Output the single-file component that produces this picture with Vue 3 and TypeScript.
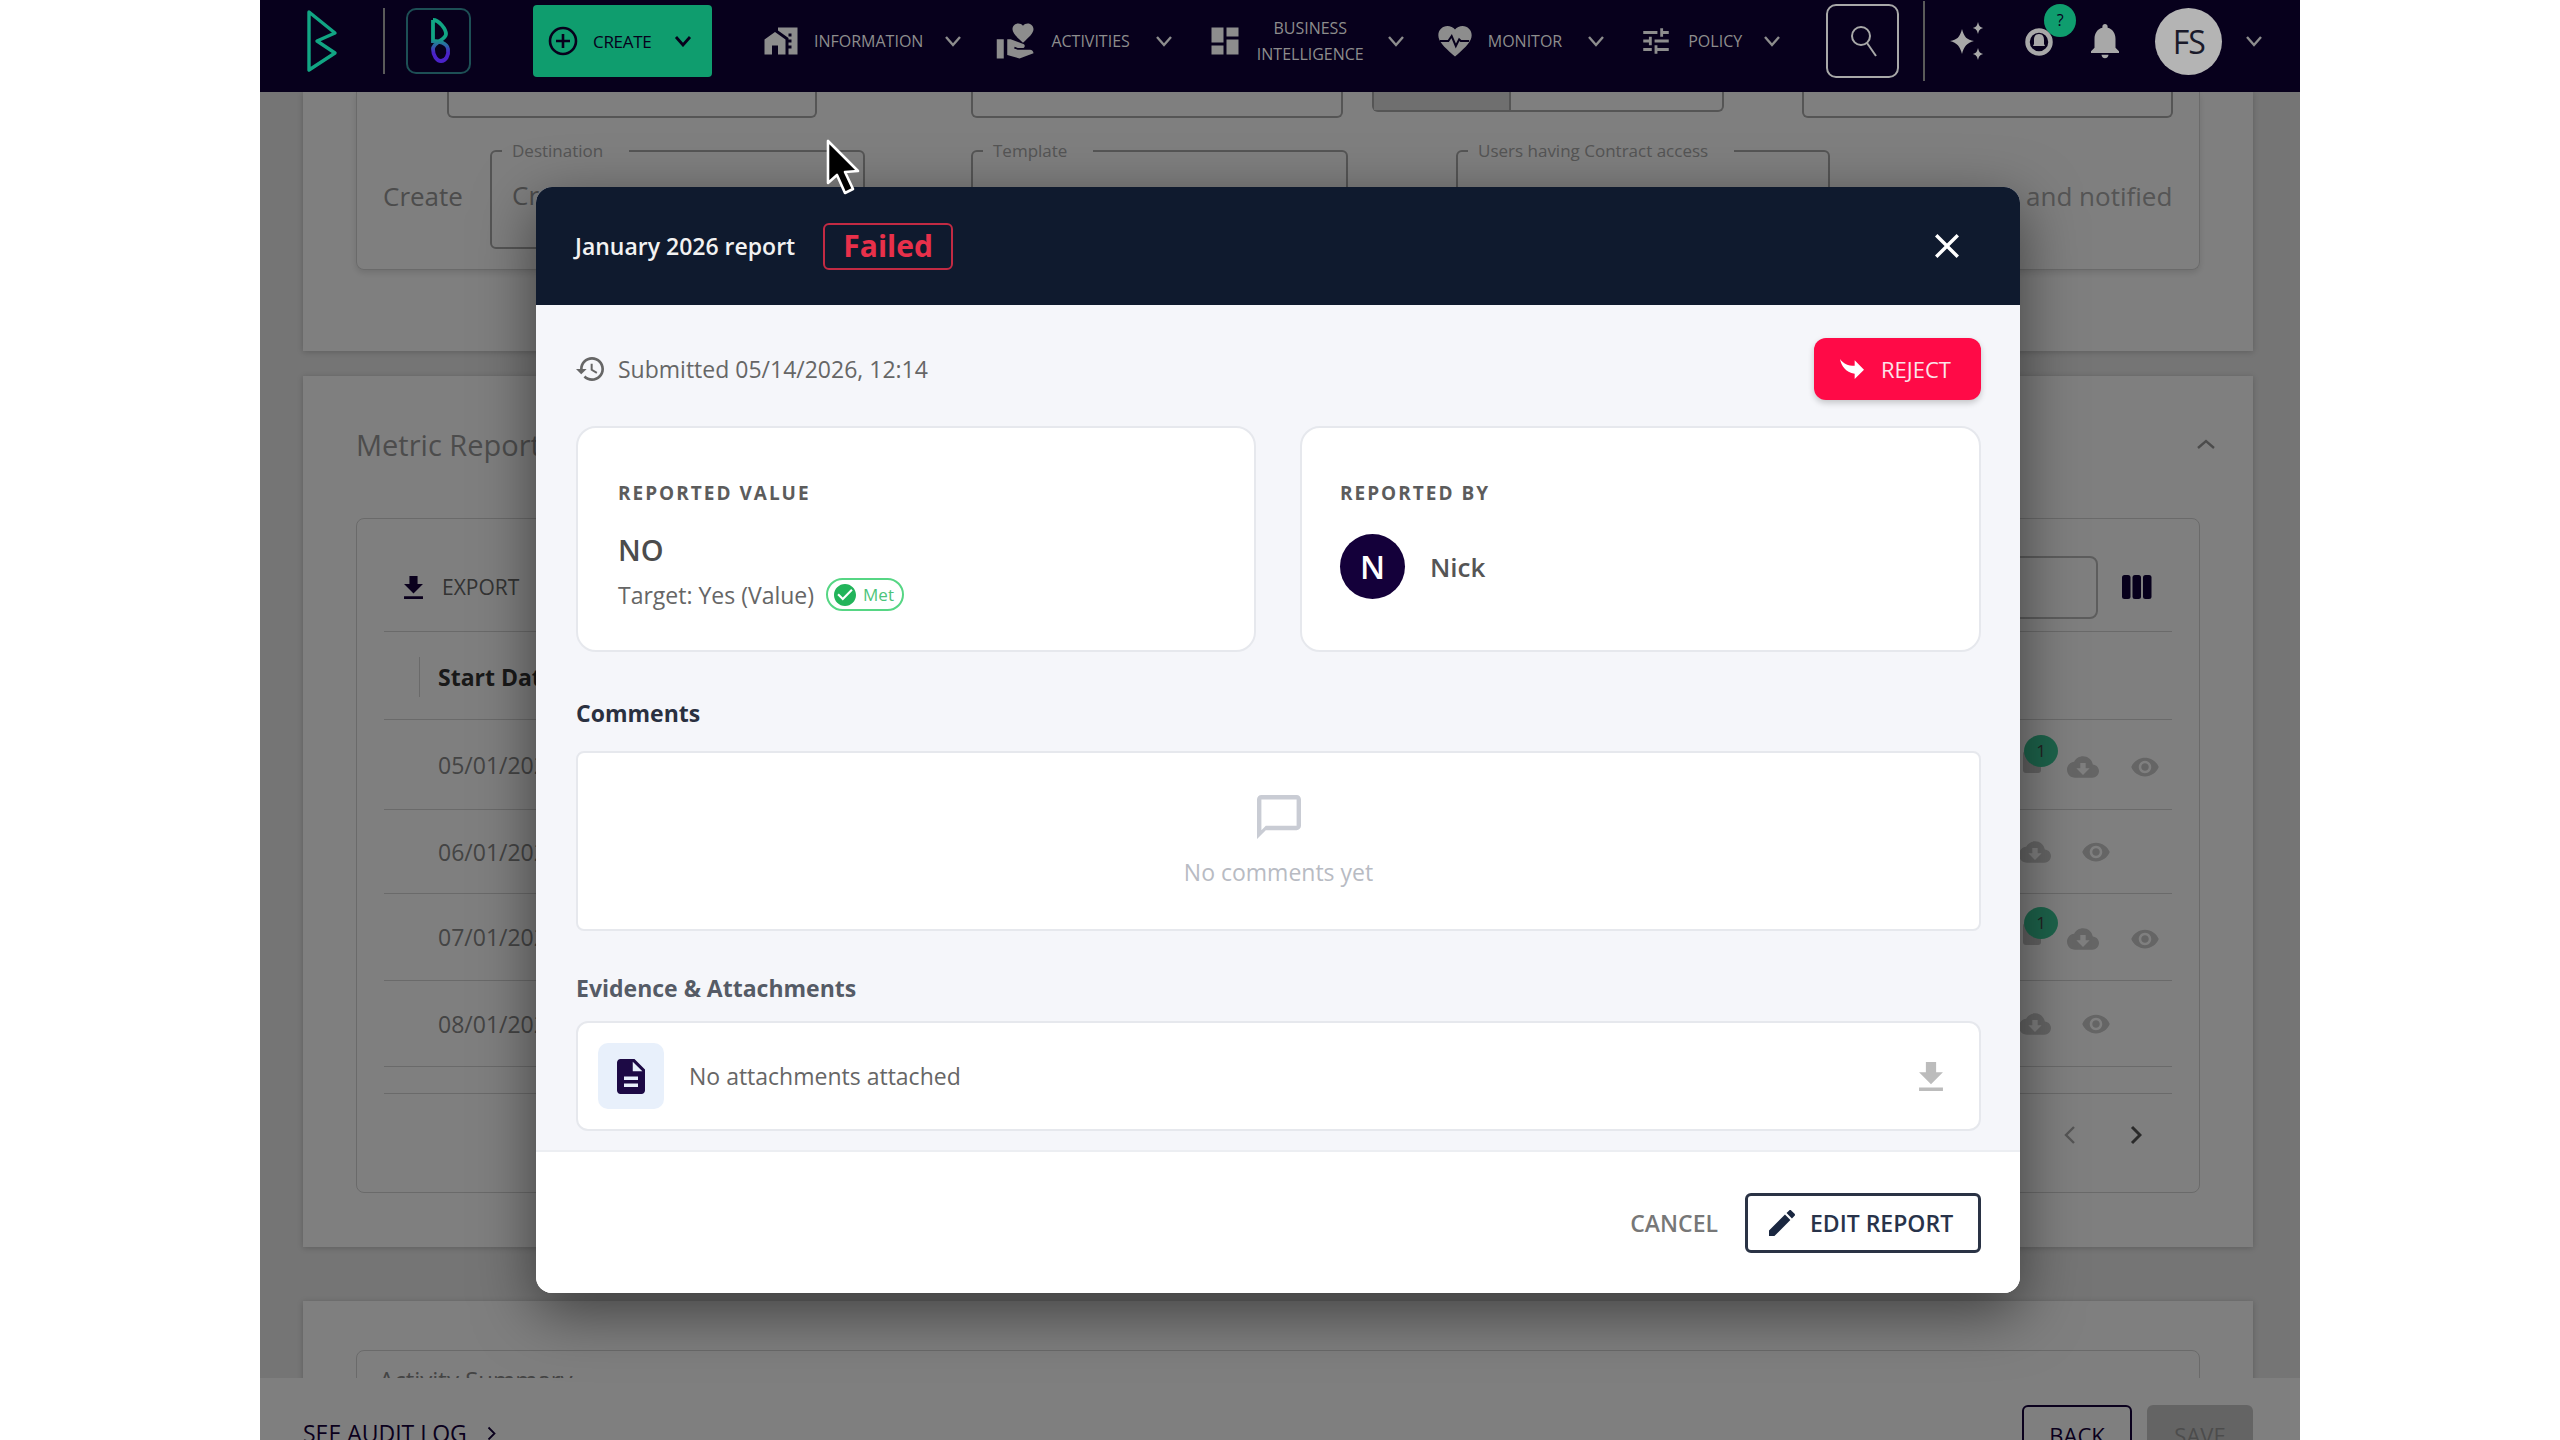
<script setup lang="ts">
interface NavItem {
  label: string[]
  icon: string
  size: number
  cls: string
}

interface ReportRow {
  date: string
  height: number
  badge: boolean
}

const navItems: NavItem[] = [
  {
    label: ['INFORMATION'],
    size: 36,
    cls: 'nav-item--info',
    icon: 'M1 11v10h5v-6h4v6h5V11L8 6z M10 3v1.97l7 5V11h2v2h-2v2h2v2h-2v4h6V3H10zm9 6h-2V7h2v2z',
  },
  {
    label: ['ACTIVITIES'],
    size: 42,
    cls: 'nav-item--activities',
    icon: 'M1 11h4v11H1zm15-7.75C16.65 2.49 17.66 2 18.7 2 20.55 2 22 3.45 22 5.3c0 2.27-2.91 4.9-6 7.7-3.09-2.81-6-5.44-6-7.7C10 3.45 11.45 2 13.3 2c1.04 0 2.05.49 2.7 1.25zM20 17h-7l-2.09-.73.33-.94L13 16h2.82c.65 0 1.18-.53 1.18-1.18 0-.49-.31-.93-.77-1.11L8.97 11H7v9.02L14 22l8.01-3c-.01-1.1-.9-2-2.01-2z',
  },
  {
    label: ['BUSINESS', 'INTELLIGENCE'],
    size: 36,
    cls: 'nav-item--bi',
    icon: 'M3 13h8V3H3v10zm0 8h8v-6H3v6zm10 0h8V11h-8v10zm0-18v6h8V3h-8z',
  },
  {
    label: ['MONITOR'],
    size: 40,
    cls: 'nav-item--monitor',
    icon: 'M12 21.35l-1.45-1.32C5.4 15.36 2 12.28 2 8.5 2 5.42 4.42 3 7.5 3c1.74 0 3.41.81 4.5 2.09C13.09 3.81 14.76 3 16.5 3 19.58 3 22 5.42 22 8.5c0 3.78-3.4 6.86-8.55 11.54L12 21.35z',
  },
  {
    label: ['POLICY'],
    size: 34,
    cls: 'nav-item--policy',
    icon: 'M3 17v2h6v-2H3zM3 5v2h10V5H3zm10 16v-2h8v-2h-8v-2h-2v6h2zM7 9v2H3v2h4v2h2V9H7zm14 4v-2H11v2h10zm-6-4h2V7h4V5h-4V3h-2v6z',
  },
]

const rows: ReportRow[] = [
  { date: '05/01/2026', height: 90, badge: true },
  { date: '06/01/2026', height: 84, badge: false },
  { date: '07/01/2026', height: 87, badge: true },
  { date: '08/01/2026', height: 86, badge: false },
]

const bellPath =
  'M12 22c1.1 0 2-.9 2-2h-4c0 1.1.89 2 2 2zm6-6v-5c0-3.07-1.64-5.64-4.5-6.32V4c0-.83-.67-1.5-1.5-1.5s-1.5.67-1.5 1.5v.68C7.63 5.36 6 7.92 6 11v5l-2 2v1h16v-1l-2-2z'
const downloadPath = 'M19 9h-4V3H9v6H5l7 7 7-7zM5 18v2h14v-2H5z'
const cloudPath =
  'M19.35 10.04C18.67 6.59 15.64 4 12 4 9.11 4 6.6 5.64 5.35 8.04 2.34 8.36 0 10.91 0 14c0 3.31 2.69 6 6 6h13c2.76 0 5-2.24 5-5 0-2.64-2.05-4.78-4.65-4.96zM17 13l-5 5-5-5h3V9h4v4h3z'
const eyePath =
  'M12 4.5C7 4.5 2.73 7.61 1 12c1.73 4.39 6 7.5 11 7.5s9.27-3.11 11-7.5c-1.73-4.39-6-7.5-11-7.5zM12 17c-2.76 0-5-2.24-5-5s2.24-5 5-5 5 2.24 5 5-2.24 5-5 5zm0-8c-1.66 0-3 1.34-3 3s1.34 3 3 3 3-1.34 3-3-1.34-3-3-3z'
</script>

<template>
  <div class="screen">
    <header class="nav">
      <svg class="logo" viewBox="0 0 32 64" width="32" height="64">
        <path d="M3 3 L29 24 L11 32 L29 44 L3 61 Z" fill="none" stroke="#11a583" stroke-width="3.4" stroke-linejoin="round" />
      </svg>
      <span class="nav-rule"></span>
      <div class="logo-box">
        <svg viewBox="0 0 40 60" width="40" height="60">
          <defs>
            <linearGradient id="brandB" x1="0" y1="0" x2="0" y2="1">
              <stop offset="0.45" stop-color="#11a583" />
              <stop offset="0.8" stop-color="#4a22c9" />
            </linearGradient>
          </defs>
          <path d="M14 9 C20 9 27 18 27 23 C27 29 14 31 14 38 C14 45 18 50 22 50 C27 50 30 44 29 38 C28 32 20 30 14 30 L14 9" fill="none" stroke="url(#brandB)" stroke-width="3.8" />
        </svg>
      </div>
      <button class="create-btn">
        <svg viewBox="0 0 30 30" width="30" height="30">
          <circle cx="15" cy="15" r="13" fill="none" stroke="#07001c" stroke-width="2.6" />
          <path d="M15 8v14M8 15h14" stroke="#07001c" stroke-width="2.6" />
        </svg>
        <span>CREATE</span>
        <svg class="chev" viewBox="0 0 18 12" width="18" height="12"><path d="M2 2l7 8 7-8" fill="none" stroke="#07001c" stroke-width="2.8" /></svg>
      </button>
      <div v-for="item in navItems" :key="item.label[0]" class="nav-item" :class="item.cls">
        <span class="nav-icon">
          <svg viewBox="0 0 24 24" :width="item.size" :height="item.size">
            <path :d="item.icon" fill="#8d8d8d" />
            <path v-if="item.label[0] === 'MONITOR'" d="M3 12h5l2-3 2.5 6 2-4 1 1h5" fill="none" stroke="#07001c" stroke-width="1.2" />
          </svg>
        </span>
        <span class="nav-label">
          <span v-for="line in item.label" :key="line">{{ line }}</span>
        </span>
        <svg class="chev" viewBox="0 0 18 12" width="18" height="12"><path d="M2 2l7 8 7-8" fill="none" stroke="#8d8d8d" stroke-width="2.4" /></svg>
      </div>
      <div class="search-box">
        <svg viewBox="0 0 30 34" width="30" height="34">
          <circle cx="13" cy="12" r="9" fill="none" stroke="#a8a8a8" stroke-width="2" />
          <path d="M19 19l9 13" stroke="#a8a8a8" stroke-width="2" />
        </svg>
      </div>
      <span class="nav-rule nav-rule--tall"></span>
      <svg class="sparkle" viewBox="0 0 36 38" width="36" height="38">
        <path d="M13 7 C15 15 18 18 25 19 C18 21 15 24 13 32 C11 24 8 21 1 19 C8 18 11 15 13 7Z M29 0 C30 4 31 5 34 6 C31 7 30 8 29 12 C28 8 27 7 24 6 C27 5 28 4 29 0Z M29 26 C30 30 31 31 34 32 C31 33 30 34 29 38 C28 34 27 33 24 32 C27 31 28 30 29 26Z" fill="#a8a8a8" />
      </svg>
      <div class="ring-bell">
        <svg viewBox="0 0 28 34" width="28" height="34">
          <circle cx="14" cy="18" r="11.5" fill="none" stroke="#a8a8a8" stroke-width="4.5" />
          <path d="M14 10c-4 0-5 3-5 6v4l-1 2h12l-1-2v-4c0-3-1-6-5-6z" fill="#a8a8a8" />
        </svg>
        <span class="ring-badge">?</span>
      </div>
      <svg class="plain-bell" viewBox="4 2 16 20.4" width="28" height="36"><path :d="bellPath" fill="#a8a8a8" /></svg>
      <div class="avatar">FS</div>
      <svg class="chev chev--last" viewBox="0 0 18 12" width="18" height="12"><path d="M2 2l7 8 7-8" fill="none" stroke="#8d8d8d" stroke-width="2.4" /></svg>
    </header>

    <main class="page">
      <section class="panel panel--create">
        <div class="inner inner--create">
          <div class="stub-row">
            <div class="stub stub--a"></div>
            <div class="stub stub--b"></div>
            <div class="stub stub--c"><span></span></div>
            <div class="stub stub--d"></div>
          </div>
          <div class="rule-row">
            <span class="rule-text">Create</span>
            <fieldset class="field field--dest"><legend>Destination</legend><span>Create</span></fieldset>
            <fieldset class="field field--tpl"><legend>Template</legend></fieldset>
            <fieldset class="field field--users"><legend>Users having Contract access</legend></fieldset>
            <span class="rule-text rule-text--end">and notified</span>
          </div>
        </div>
      </section>

      <section class="panel panel--metric">
        <div class="metric-head">
          <h2>Metric Reports</h2>
          <svg viewBox="0 0 20 12" width="20" height="12"><path d="M2 10l8-7 8 7" fill="none" stroke="#999" stroke-width="2.4" /></svg>
        </div>
        <div class="inner inner--table">
          <div class="toolbar">
            <button class="export">
              <svg viewBox="5 3 14 17" width="19" height="23"><path :d="downloadPath" fill="#14003a" /></svg>
              EXPORT
            </button>
            <div class="toolbar-right">
              <div class="table-search"></div>
              <svg viewBox="0 0 30 24" width="30" height="24">
                <rect x="0" y="0" width="8.5" height="24" rx="2.5" fill="#0e0038" />
                <rect x="10.5" y="0" width="8.5" height="24" rx="2.5" fill="#0e0038" />
                <rect x="21" y="0" width="8.5" height="24" rx="2.5" fill="#0e0038" />
              </svg>
            </div>
          </div>
          <div class="table-head"><span class="head-sep"></span><b>Start Date</b></div>
          <div v-for="row in rows" :key="row.date" class="table-row" :style="{ height: row.height + 'px' }">
            <span>{{ row.date }}</span>
            <div class="row-actions" :class="{ 'row-actions--short': !row.badge }">
              <span v-if="row.badge" class="doc-stub"></span>
              <span v-if="row.badge" class="doc-badge">1</span>
              <svg viewBox="0 0 24 24" width="32" height="32"><path :d="cloudPath" fill="#cacaca" /></svg>
              <svg class="eye" viewBox="0 0 24 24" width="30" height="30"><path :d="eyePath" fill="#cacaca" /></svg>
            </div>
          </div>
          <div class="table-spacer"></div>
          <div class="pager">
            <svg viewBox="0 0 12 20" width="12" height="20"><path d="M10 2l-8 8 8 8" fill="none" stroke="#aaa" stroke-width="2.4" /></svg>
            <svg viewBox="0 0 12 20" width="12" height="20"><path d="M2 2l8 8-8 8" fill="none" stroke="#555" stroke-width="3" /></svg>
          </div>
        </div>
      </section>

      <section class="panel panel--activity">
        <div class="inner inner--activity">Activity Summary</div>
      </section>
    </main>

    <footer class="page-foot">
      <span class="audit">SEE AUDIT LOG <svg viewBox="0 0 12 20" width="9" height="15"><path d="M2 2l8 8-8 8" fill="none" stroke="#14003a" stroke-width="2.4" /></svg></span>
      <div class="foot-btns">
        <button class="btn-back">BACK</button>
        <button class="btn-save">SAVE</button>
      </div>
    </footer>

    <div class="overlay">
      <div class="modal">
        <div class="modal-head">
          <span class="modal-title">January 2026 report</span>
          <span class="status-chip">Failed</span>
          <svg class="modal-close" viewBox="5 5 14 14" width="24" height="24">
            <path d="M19 6.41 17.59 5 12 10.59 6.41 5 5 6.41 10.59 12 5 17.59 6.41 19 12 13.41 17.59 19 19 17.59 13.41 12z" fill="#fff" />
          </svg>
        </div>

        <div class="modal-body">
          <div class="submitted-row">
            <div class="submitted">
              <svg viewBox="1 3 21 18" width="28" height="24">
                <path d="M13 3c-4.97 0-9 4.03-9 9H1l3.89 3.89.07.14L9 12H6c0-3.87 3.13-7 7-7s7 3.13 7 7-3.13 7-7 7c-1.93 0-3.68-.79-4.94-2.06l-1.42 1.42C8.27 19.99 10.51 21 13 21c4.97 0 9-4.03 9-9s-4.03-9-9-9zm-1 5v5l4.28 2.54.72-1.21-3.5-2.08V8H12z" fill="#666" />
              </svg>
              <span>Submitted 05/14/2026, 12:14</span>
            </div>
            <button class="reject-btn">
              <svg viewBox="3 5 18 15" width="24" height="22">
                <path transform="rotate(180 12 12.5)" d="M10 9V5l-7 7 7 7v-4.1c5 0 8.5 1.6 11 5.1-1-5-4-10-11-11z" fill="#fff" />
              </svg>
              REJECT
            </button>
          </div>

          <div class="info-grid">
            <div class="info-card">
              <div class="info-label">REPORTED VALUE</div>
              <div class="info-value">NO</div>
              <div class="info-target">
                <span>Target: Yes (Value)</span>
                <span class="met-pill">
                  <svg viewBox="2 2 20 20" width="22" height="22">
                    <path d="M12 2C6.48 2 2 6.48 2 12s4.48 10 10 10 10-4.48 10-10S17.52 2 12 2zm-2 15l-5-5 1.41-1.41L10 14.17l7.59-7.59L19 8l-9 9z" fill="#22b45a" />
                  </svg>
                  Met
                </span>
              </div>
            </div>
            <div class="info-card info-card--by">
              <div class="info-label">REPORTED BY</div>
              <div class="reporter">
                <span class="reporter-avatar">N</span>
                <span class="reporter-name">Nick</span>
              </div>
            </div>
          </div>

          <h3 class="section-title section-title--dark">Comments</h3>
          <div class="comments-box">
            <svg viewBox="2 2 20 20" width="44" height="44">
              <path d="M20 2H4c-1.1 0-2 .9-2 2v18l4-4h14c1.1 0 2-.9 2-2V4c0-1.1-.9-2-2-2zm0 14H6l-2 2V4h16v12z" fill="#c9ccd4" />
            </svg>
            <span>No comments yet</span>
          </div>

          <h3 class="section-title">Evidence &amp; Attachments</h3>
          <div class="attach-box">
            <span class="attach-tile">
              <svg viewBox="4 2 16 20" width="28" height="35">
                <path d="M14 2H6c-1.1 0-1.99.9-1.99 2L4 20c0 1.1.89 2 1.99 2H18c1.1 0 2-.9 2-2V8l-6-6zm2 16H8v-2h8v2zm0-4H8v-2h8v2zm-3-5V3.5L18.5 9H13z" fill="#1d0a45" />
              </svg>
            </span>
            <span class="attach-text">No attachments attached</span>
            <svg class="attach-dl" viewBox="5 3 14 17" width="24" height="29"><path :d="downloadPath" fill="#bcbcbc" /></svg>
          </div>
        </div>

        <div class="modal-foot">
          <button class="cancel-btn">CANCEL</button>
          <button class="edit-btn">
            <svg viewBox="3 3 18 18" width="26" height="26">
              <path d="M3 17.25V21h3.75L17.81 9.94l-3.75-3.75L3 17.25zM20.71 7.04c.39-.39.39-1.02 0-1.41l-2.34-2.34c-.39-.39-1.02-.39-1.41 0l-1.83 1.83 3.75 3.75 1.83-1.83z" fill="#1a2740" />
            </svg>
            EDIT REPORT
          </button>
        </div>
      </div>
    </div>

    <svg class="cursor" viewBox="0 0 36 58" width="36" height="58">
      <path d="M3 2 L3 44 L12 36 L20 54 L28 50 L20 33 L33 32 Z" fill="#000" stroke="#fff" stroke-width="2.6" stroke-linejoin="round" />
    </svg>
  </div>
</template>

<style>
html,
body {
  margin: 0;
  background: #fff;
}
</style>

<style scoped>
.screen {
  position: relative;
  width: 2040px;
  height: 1440px;
  margin-left: 260px;
  overflow: hidden;
  display: flex;
  flex-direction: column;
  background: #eaeaea;
  font-family: 'Open Sans', sans-serif;
}

button {
  font-family: inherit;
  border: none;
  background: none;
  padding: 0;
}

svg {
  display: block;
  flex-shrink: 0;
}

.nav {
  position: relative;
  z-index: 3;
  flex: 0 0 92px;
  box-sizing: border-box;
  display: flex;
  align-items: center;
  padding: 0 0 10px 46px;
  background: #07001c;
  color: #8d8d8d;
}

.nav-rule {
  width: 2px;
  height: 66px;
  margin: 0 21px 0 45px;
  background: #5a5a5a;
}

.logo-box {
  width: 65px;
  height: 66px;
  box-sizing: border-box;
  border: 2px solid #1d4f55;
  border-radius: 10px;
  display: flex;
  align-items: center;
  justify-content: center;
}

.create-btn {
  width: 179px;
  height: 72px;
  margin-left: 62px;
  padding: 0 20px 0 15px;
  box-sizing: border-box;
  display: flex;
  align-items: center;
  border-radius: 4px;
  background: #0f9d6e;
  color: #07001c;
  font-size: 17px;
}

.create-btn span {
  margin-left: 15px;
  flex: 1;
  text-align: left;
  letter-spacing: -0.3px;
}

.nav-item {
  display: flex;
  align-items: center;
}

.nav-icon {
  display: flex;
  justify-content: center;
}

.nav-label {
  display: flex;
  flex-direction: column;
  align-items: center;
  font-size: 16px;
  line-height: 26px;
  white-space: nowrap;
}

.nav-item--info {
  margin-left: 51px;
}
.nav-item--info .nav-label {
  margin: 0 21px 0 15px;
}

.nav-item--activities {
  margin-left: 33px;
}
.nav-item--activities .nav-label {
  margin: 0 25px 0 14px;
}

.nav-item--bi {
  margin-left: 34px;
}
.nav-item--bi .nav-label {
  margin: 0 23px 0 14px;
}

.nav-item--monitor {
  margin-left: 30px;
}
.nav-item--monitor .nav-label {
  margin: 0 25px 0 13px;
}

.nav-item--policy {
  margin-left: 34px;
}
.nav-item--policy .nav-label {
  margin: 0 21px 0 15px;
}

.search-box {
  width: 73px;
  height: 74px;
  margin-left: 45px;
  box-sizing: border-box;
  border: 2px solid #a8a8a8;
  border-radius: 10px;
  display: flex;
  align-items: center;
  justify-content: center;
}

.nav-rule--tall {
  height: 80px;
  margin: 0 24px;
}

.ring-bell {
  position: relative;
  margin-left: 40px;
}

.ring-badge {
  position: absolute;
  left: 19px;
  top: -20px;
  width: 32px;
  height: 33px;
  border-radius: 50%;
  background: #0f9d6e;
  color: #07001c;
  font-size: 16px;
  line-height: 33px;
  text-align: center;
}

.plain-bell {
  margin-left: 38px;
}

.avatar {
  width: 67px;
  height: 67px;
  margin-left: 36px;
  border-radius: 50%;
  background: #b4b4b4;
  color: #1a1a2a;
  font-size: 32px;
  line-height: 67px;
  text-align: center;
  letter-spacing: -1px;
}

.chev--last {
  margin-left: 23px;
}

.page {
  flex: 1;
  min-height: 0;
  overflow: hidden;
  padding: 0 47px 0 43px;
}

.panel {
  background: #fff;
  padding: 0 53px;
  box-shadow: 0 1px 6px rgba(0, 0, 0, 0.2);
}

.panel--create {
  padding-bottom: 81px;
}

.inner {
  border: 1px solid #d4d4d4;
  border-radius: 8px;
  box-sizing: border-box;
}

.inner--create {
  border-top: none;
  border-radius: 0 0 8px 8px;
  padding: 0 26px 21px;
  height: 178px;
  box-shadow: 0 3px 6px rgba(0, 0, 0, 0.12);
}

.stub-row {
  display: flex;
  align-items: flex-start;
  height: 26px;
  padding-left: 64px;
}

.stub {
  border: 2px solid #aaa;
  border-top: none;
  border-radius: 0 0 6px 6px;
  box-sizing: border-box;
  height: 26px;
}

.stub--a {
  width: 370px;
}
.stub--b {
  width: 372px;
  margin-left: 154px;
}
.stub--c {
  width: 352px;
  height: 20px;
  margin-left: 29px;
}
.stub--c span {
  display: block;
  width: 135px;
  height: 18px;
  background: #dedede;
  border-right: 2px solid #aaa;
}
.stub--d {
  width: 371px;
  margin-left: 78px;
}

.rule-row {
  display: flex;
  align-items: center;
  margin-top: 21px;
}

.rule-text {
  width: 80px;
  margin-top: 3px;
  font-size: 26px;
  color: #999;
}

.rule-text--end {
  width: auto;
  margin-left: 196px;
  white-space: nowrap;
  color: #aaa;
}

.field {
  margin: 0;
  padding: 0 20px;
  height: 110px;
  box-sizing: border-box;
  border: 2px solid #aaa;
  border-radius: 6px;
  font-size: 26px;
  color: #999;
}

.field legend {
  padding: 0 26px 0 10px;
  margin-left: -10px;
  font-size: 17px;
  line-height: 24px;
  color: #aaa;
}

.field span {
  display: block;
  margin-top: 14px;
}

.field--dest {
  width: 375px;
  margin-left: 27px;
}
.field--tpl {
  width: 377px;
  margin-left: 106px;
}
.field--users {
  width: 374px;
  margin-left: 108px;
}

.panel--metric {
  margin-top: 25px;
  padding-bottom: 54px;
}

.metric-head {
  height: 136px;
  margin: 0 -16px 6px 0;
  display: flex;
  align-items: center;
  justify-content: space-between;
}

.metric-head h2 {
  margin: 0;
  font-size: 29px;
  font-weight: 400;
  color: #999;
}

.inner--table {
  height: 675px;
  padding: 0 27px;
}

.toolbar {
  height: 113px;
  box-sizing: border-box;
  padding: 24px 0 0 20px;
  display: flex;
  align-items: center;
  justify-content: space-between;
  border-bottom: 1px solid #d4d4d4;
}

.export {
  display: flex;
  align-items: center;
  gap: 19px;
  font-size: 21px;
  color: #666;
}

.toolbar-right {
  display: flex;
  align-items: center;
  gap: 24px;
  padding-right: 20px;
}

.table-search {
  width: 300px;
  height: 63px;
  box-sizing: border-box;
  border: 2px solid #bbb;
  border-radius: 8px;
}

.table-head {
  height: 88px;
  box-sizing: border-box;
  padding: 2px 0 0 35px;
  display: flex;
  align-items: center;
  border-bottom: 1px solid #d4d4d4;
  font-size: 23px;
  color: #333;
}

.head-sep {
  width: 1px;
  height: 40px;
  margin-right: 18px;
  background: #d4d4d4;
}

.table-row {
  box-sizing: border-box;
  display: flex;
  align-items: center;
  justify-content: space-between;
  padding-left: 54px;
  border-bottom: 1px solid #d4d4d4;
  font-size: 23px;
  color: #888;
}

.row-actions {
  position: relative;
  display: flex;
  align-items: center;
  gap: 31px;
  padding-right: 12px;
  margin-top: 4px;
}

.row-actions--short {
  padding-right: 61px;
  gap: 30px;
  margin-top: 0;
}

.doc-stub {
  position: absolute;
  left: -44px;
  top: 0;
  width: 18px;
  height: 22px;
  border-radius: 3px;
  background: #c4c4c4;
}

.doc-badge {
  position: absolute;
  left: -43px;
  top: -16px;
  width: 34px;
  height: 32px;
  border-radius: 50%;
  background: #3bc796;
  color: #444;
  font-size: 17px;
  line-height: 32px;
  text-align: center;
}

.table-spacer {
  height: 27px;
  box-sizing: border-box;
  border-bottom: 1px solid #d4d4d4;
}

.pager {
  display: flex;
  justify-content: flex-end;
  gap: 54px;
  padding: 31px 30px 0 0;
}

.panel--activity {
  margin-top: 54px;
  padding-top: 49px;
  height: 400px;
  box-sizing: border-box;
}

.inner--activity {
  height: 300px;
  padding: 12px 22px;
  font-size: 24px;
  color: #888;
}

.page-foot {
  position: relative;
  flex: 0 0 62px;
  box-sizing: border-box;
  padding: 27px 47px 0 43px;
  display: flex;
  justify-content: space-between;
  overflow: hidden;
  background: #fff;
}

.audit {
  display: flex;
  align-items: center;
  gap: 20px;
  height: 56px;
  font-size: 23px;
  color: #14003a;
}

.foot-btns {
  display: flex;
  gap: 15px;
}

.btn-back,
.btn-save {
  height: 60px;
  box-sizing: border-box;
  border-radius: 6px;
  font-size: 22px;
}

.btn-back {
  width: 110px;
  border: 2px solid #14003a;
  color: #14003a;
}

.btn-save {
  width: 106px;
  background: #c9c9c9;
  color: #999;
}

.overlay {
  position: absolute;
  inset: 92px 0 0;
  z-index: 2;
  padding: 95px 0 0 276px;
  background: rgba(0, 0, 0, 0.5);
}

.modal {
  width: 1484px;
  height: 1106px;
  display: flex;
  flex-direction: column;
  border-radius: 16px;
  overflow: hidden;
  background: #fff;
  box-shadow: 0 18px 60px rgba(0, 0, 0, 0.5);
}

.modal-head {
  flex: 0 0 118px;
  display: flex;
  align-items: center;
  padding: 0 61px 0 39px;
  background: #0f1a2e;
}

.modal-title {
  font-size: 23px;
  font-weight: 600;
  color: #f2f2f2;
}

.status-chip {
  margin-left: 28px;
  width: 130px;
  height: 47px;
  box-sizing: border-box;
  border: 2px solid #c22a43;
  border-radius: 6px;
  font-size: 30px;
  font-weight: 700;
  line-height: 41px;
  text-align: center;
  color: #e8304a;
}

.modal-close {
  margin-left: auto;
}

.modal-body {
  flex: 1;
  box-sizing: border-box;
  padding: 32px 39px 0 40px;
  background: #f5f6fa;
  border-bottom: 2px solid #eceef2;
}

.submitted-row {
  display: flex;
  align-items: center;
  justify-content: space-between;
  height: 63px;
}

.submitted {
  display: flex;
  align-items: center;
  gap: 14px;
  font-size: 23px;
  color: #666;
}

.reject-btn {
  width: 167px;
  height: 62px;
  display: flex;
  align-items: center;
  gap: 17px;
  padding-left: 26px;
  box-sizing: border-box;
  border-radius: 12px;
  background: #ff0a47;
  color: #fbe3e8;
  font-size: 22px;
  box-shadow: 0 3px 6px rgba(0, 0, 0, 0.2);
}

.info-grid {
  display: grid;
  grid-template-columns: 680px 681px;
  justify-content: space-between;
  margin-top: 26px;
}

.info-card {
  height: 226px;
  box-sizing: border-box;
  padding: 52px 40px 0;
  background: #fff;
  border: 2px solid #e6e8ed;
  border-radius: 20px;
}

.info-card--by {
  padding-left: 38px;
}

.info-label {
  font-size: 19px;
  line-height: 26px;
  font-weight: 700;
  letter-spacing: 2px;
  color: #5c5c5c;
}

.info-value {
  margin-top: 23px;
  font-size: 29px;
  line-height: 42px;
  font-weight: 600;
  color: #4c4c4c;
}

.info-target {
  display: flex;
  align-items: center;
  gap: 12px;
  margin-top: 7px;
  font-size: 23px;
  color: #666;
}

.met-pill {
  display: flex;
  align-items: center;
  gap: 7px;
  width: 78px;
  height: 33px;
  padding-left: 6px;
  box-sizing: border-box;
  border: 2px solid #56d684;
  border-radius: 17px;
  font-size: 17px;
  color: #4cc47a;
}

.reporter {
  display: flex;
  align-items: center;
  gap: 25px;
  margin-top: 28px;
}

.reporter-avatar {
  width: 65px;
  height: 65px;
  border-radius: 50%;
  background: #14003a;
  color: #fff;
  font-size: 32px;
  font-weight: 600;
  line-height: 65px;
  text-align: center;
}

.reporter-name {
  font-size: 26px;
  font-weight: 600;
  color: #555;
}

.section-title {
  margin: 41px 0 0;
  font-size: 23px;
  line-height: 32px;
  font-weight: 700;
  color: #555b66;
}

.section-title--dark {
  margin-top: 45px;
  color: #2a3040;
}

.comments-box {
  height: 180px;
  margin-top: 22px;
  box-sizing: border-box;
  padding-top: 42px;
  display: flex;
  flex-direction: column;
  align-items: center;
  gap: 17px;
  background: #fff;
  border: 2px solid #e6e8ed;
  border-radius: 8px;
  font-size: 23px;
  color: #b8bbc3;
}

.attach-box {
  height: 110px;
  margin-top: 17px;
  box-sizing: border-box;
  padding: 0 36px 0 20px;
  display: flex;
  align-items: center;
  background: #fff;
  border: 2px solid #e6e8ed;
  border-radius: 12px;
}

.attach-tile {
  width: 66px;
  height: 66px;
  display: flex;
  align-items: center;
  justify-content: center;
  border-radius: 10px;
  background: #e8f0fb;
}

.attach-text {
  margin-left: 25px;
  font-size: 23px;
  color: #666;
}

.attach-dl {
  margin-left: auto;
}

.modal-foot {
  flex: 0 0 141px;
  display: flex;
  align-items: center;
  justify-content: flex-end;
  gap: 27px;
  padding: 0 39px 0 40px;
  background: #fff;
}

.cancel-btn {
  font-size: 23px;
  font-weight: 600;
  color: #777;
}

.edit-btn {
  width: 236px;
  height: 60px;
  display: flex;
  align-items: center;
  gap: 15px;
  padding-left: 21px;
  box-sizing: border-box;
  border: 3px solid #2a3345;
  border-radius: 6px;
  font-size: 23px;
  font-weight: 600;
  color: #28334a;
}

.cursor {
  position: absolute;
  left: 565px;
  top: 139px;
  z-index: 4;
}
</style>
